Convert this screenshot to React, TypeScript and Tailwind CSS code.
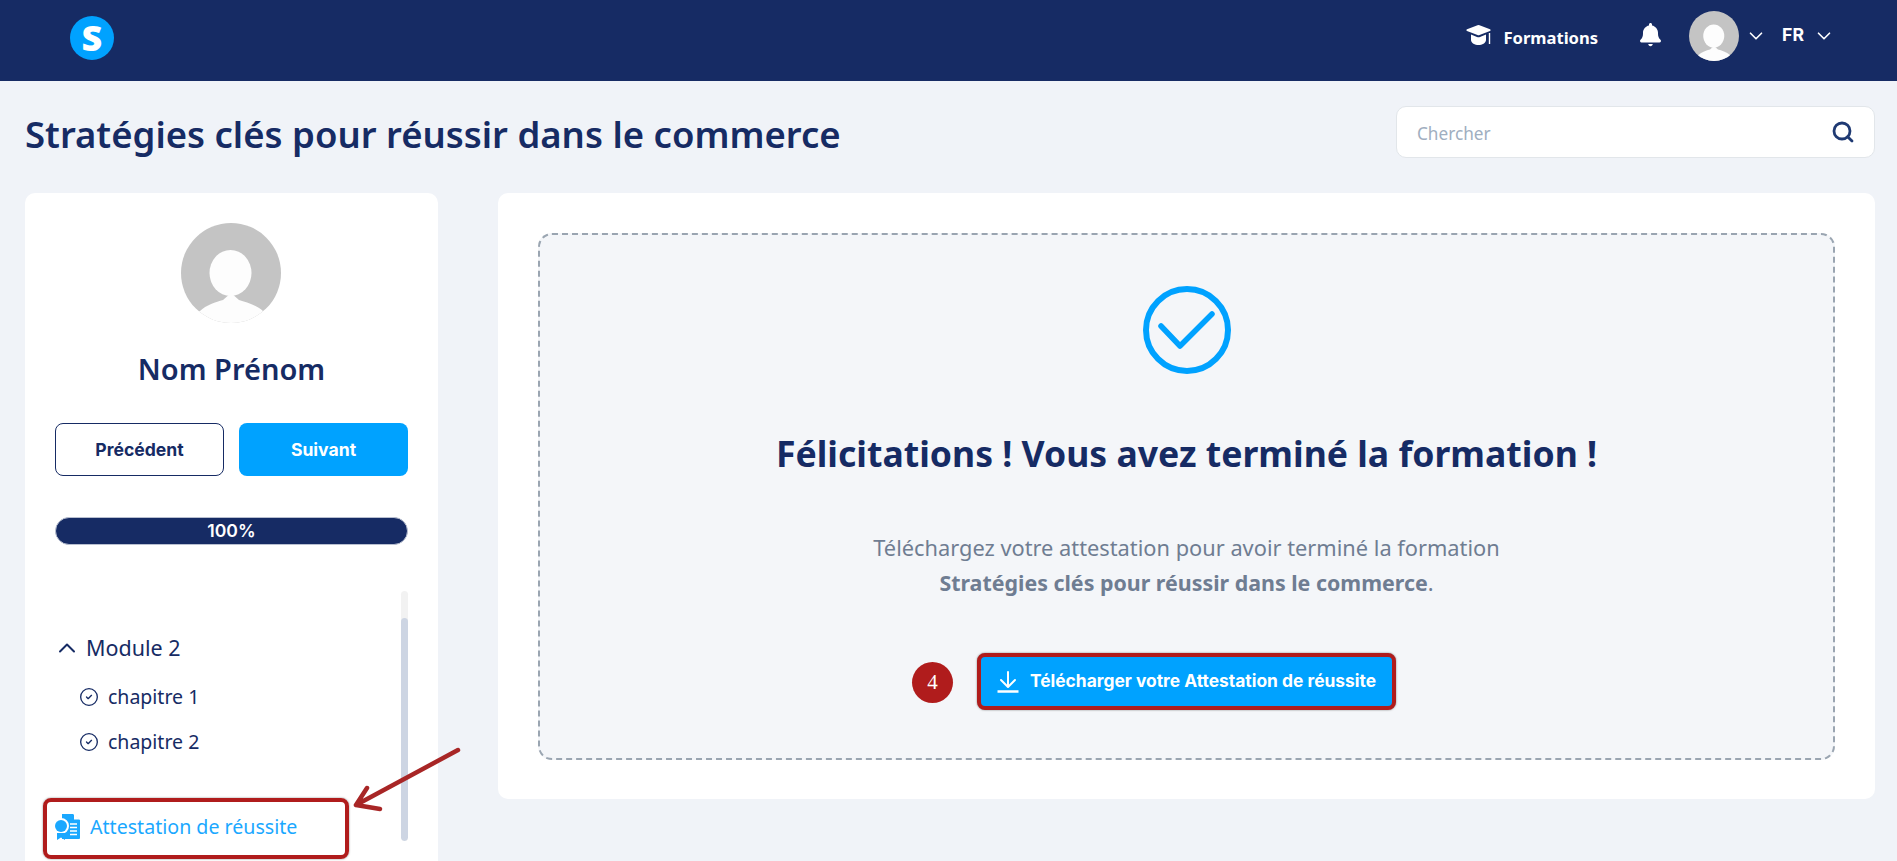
import { ChevronDown, ChevronUp, CircleCheck, Search } from "lucide-react";

const mulish = "font-['Noto_Sans','Open_Sans',sans-serif]";
const inter = "font-['Inter',sans-serif]";

function Avatar({ className }: { className: string }) {
  return (
    <svg viewBox="0 0 100 100" className={className}>
      <defs>
        <clipPath id="avatar-clip">
          <circle cx="50" cy="50" r="50" />
        </clipPath>
      </defs>
      <g clipPath="url(#avatar-clip)">
        <rect width="100" height="100" fill="#c4c4c4" />
        <ellipse cx="49.5" cy="50" rx="21" ry="23" fill="#fdfdfd" />
        <path d="M0 100V88H19C25 82 35 79 42 77L50 70L58 77C65 79 75 82 82 88H100V100Z" fill="#fdfdfd" />
      </g>
    </svg>
  );
}

function Header() {
  return (
    <header className="flex h-[81px] items-center justify-between bg-[#162b64] pl-[70px] pr-[62px]">
      <div className="-mt-[5px] flex h-11 w-11 items-center justify-center rounded-full bg-[#00a2ff]">
        <span className={`${mulish} text-[36px] font-black leading-none text-white`}>S</span>
      </div>
      <div className="-mt-[9px] flex items-center text-white">
        <svg viewBox="0 0 25 20" className="-mt-[3px] h-5 w-[25px]" fill="currentColor">
          <path d="M11.5.3a3 3 0 0 1 2 0L24 4.2c.9.4.9 1.3 0 1.7L13.5 10a3 3 0 0 1-2 0L1 5.9c-.9-.4-.9-1.3 0-1.7z" />
          <path d="M5 9.6l6 2.4a4 4 0 0 0 3 0l6-2.4V15c0 3-4 5-7.500 5S5 18 5 15z" />
          <rect x="22.800" y="8" width="1.400" height="11" />
        </svg>
        <span className={`${mulish} ml-[12px] mt-[5px] text-[16.6px] font-bold`}>Formations</span>
        <svg viewBox="0 0 448 512" className="-mt-[3px] ml-[42px] h-[24px] w-[21px]" fill="currentColor">
          <path d="M224 0c-18 0-32 14-32 32v19C119 66 64 131 64 208v19c0 47-17 92-48 127l-8 8c-8 10-10 23-5 35s17 19 29 19h384c12 0 24-7 29-19s3-25-5-35l-8-8c-31-35-48-80-48-127v-19c0-77-55-142-128-157V32c0-18-14-32-32-32zM176 448c0 26 22 48 48 48s48-22 48-48z" />
        </svg>
        <Avatar className="ml-[28px] h-[50px] w-[50px]" />
        <ChevronDown className="ml-[6px] h-[22px] w-[22px]" strokeWidth={1.8} />
        <span className={`${inter} -mt-[2px] ml-[15px] text-[17.600px] font-bold`}>FR</span>
        <ChevronDown className="ml-[9px] h-[22px] w-[22px]" strokeWidth={1.8} />
      </div>
    </header>
  );
}

function Sidebar() {
  return (
    <aside className="relative h-[700px] w-[413px] shrink-0 rounded-[10px] bg-white pl-[30px] pr-[30px] pt-[30px]">
      <Avatar className="ml-[126px] h-[100px] w-[100px]" />
      <h2 className={`${mulish} mt-[27px] text-center text-[29px] font-semibold leading-[38px] text-[#162b64]`}>
        Nom Prénom
      </h2>
      <div className={`${inter} mt-[35px] flex gap-[15px] text-[17.600px] font-bold`}>
        <button className="h-[53px] w-[169px] rounded-[8px] border border-[#162b64] bg-white pt-px text-[#162b64]">
          Précédent
        </button>
        <button className="h-[53px] w-[169px] rounded-[8px] bg-[#00a2ff] pt-[2px] text-white">Suivant</button>
      </div>
      <div className={`${inter} mt-[41px] flex h-[28px] w-[353px] items-center justify-center rounded-full border border-[#b8bfd0] bg-[#162b64] pt-px text-[17.600px] font-semibold text-white`}>
        100%
      </div>
      <div className="mt-[46px] flex">
        <div className={`${mulish} w-[346px] pt-[39px] text-[#162b64]`}>
          <div className="-ml-[2px] flex h-[36px] items-center">
            <ChevronUp className="h-[28px] w-[28px]" strokeWidth={1.7} />
            <span className="ml-[5px] text-[21.500px]">Module 2</span>
          </div>
          <div className="mt-[13px] flex h-[36px] items-center pl-[24px]">
            <CircleCheck className="h-[20px] w-[20px]" strokeWidth={1.6} />
            <span className="ml-[9px] text-[19.500px]">chapitre 1</span>
          </div>
          <div className="mt-[9px] flex h-[36px] items-center pl-[24px]">
            <CircleCheck className="h-[20px] w-[20px]" strokeWidth={1.6} />
            <span className="ml-[9px] text-[19.500px]">chapitre 2</span>
          </div>
          <div className="mt-[49px] flex h-[36px] items-center text-[#1aa8ff]">
            <svg viewBox="0 0 26 26" className="h-[26px] w-[26px]" fill="currentColor">
              <path d="M7 0H18L25 6V24a1 1 0 0 1-1 1H7z" />
              <path d="M19 0L25 5.500H19z" fill="#fff" />
              <circle cx="6" cy="12" r="8" fill="#fff" />
              <circle cx="6" cy="12" r="6" />
              <path d="M2 19H10V26L6 23.500L2 26z" />
              <path d="M15 10h7M15 13.500h7M15 17h7M15 20.500h7" stroke="#fff" strokeWidth="1.500" />
            </svg>
            <span className="ml-[9px] text-[19.600px]">Attestation de réussite</span>
          </div>
        </div>
        <div className="h-[250px] w-[7px] overflow-hidden rounded bg-[#f2f2f2] pt-[27px]">
          <div className="h-full rounded bg-[#cdd5e3]" />
        </div>
      </div>
      {/* annotation over the last link */}
      <div className="absolute left-[18px] top-[605px] h-[61px] w-[306px] rounded-[8px] border-4 border-[#b01c1c] shadow-[0_0_2px_rgba(0,0,0,0.5)]" />
    </aside>
  );
}

function Completed() {
  return (
    <section className="ml-[60px] h-[606px] flex-1 rounded-[10px] bg-white p-[40px]">
      <div className="flex h-[527px] flex-col items-center rounded-[14px] border-2 border-dashed border-[#9aa5b1] bg-[#f4f6f9] pt-[51px]">
        <svg viewBox="0 0 88 88" className="h-[88px] w-[88px]" fill="none" stroke="#00a2ff">
          <circle cx="44" cy="44" r="41" strokeWidth="6" />
          <path d="M18 40L37 60L69 28" strokeWidth="5.500" strokeLinecap="round" strokeLinejoin="round" />
        </svg>
        <h2 className={`${mulish} mt-[54px] text-[35.600px] font-bold leading-[50px] text-[#162b64]`}>
          Félicitations ! Vous avez terminé la formation !
        </h2>
        <p className={`${mulish} mt-[52px] text-center text-[21.800px] leading-[35px] text-[#6f7d92]`}>
          Téléchargez votre attestation pour avoir terminé la formation
          <br />
          <span className="text-[21.400px] font-bold">Stratégies clés pour réussir dans le commerce</span>.
        </p>
        <div className="relative mt-[53px]">
          <button className={`${inter} flex h-[57px] w-[419px] items-center justify-center gap-[11px] rounded-[8px] border-4 border-[#b01c1c] bg-[#00a2ff] text-[17.400px] font-bold text-white shadow-[0_0_2px_rgba(0,0,0,0.5)]`}>
            <svg viewBox="0 0 22 22" className="h-[22px] w-[22px]" fill="none" stroke="currentColor" strokeWidth="2">
              <path d="M11 1V15M4 9L11 16L18 9" strokeLinecap="round" strokeLinejoin="round" />
              <path d="M0.500 20.500H21.500" strokeWidth="2.500" />
            </svg>
            Télécharger votre Attestation de réussite
          </button>
          <div className="absolute -left-[65px] top-[9px] flex h-[41px] w-[41px] items-center justify-center rounded-full bg-[#b01c1c] font-['Liberation_Serif',serif] text-[21px] text-white">
            4
          </div>
        </div>
      </div>
    </section>
  );
}

export default function App() {
  return (
    <div className="relative h-[861px] w-full overflow-hidden bg-[#f0f3f8]">
      <Header />
      <main className="pl-[25px] pr-[22px]">
        <div className="flex h-[112px] items-start justify-between pt-[25px]">
          <h1 className={`${mulish} text-[36.500px] font-semibold leading-[56px] text-[#162b64]`}>
            Stratégies clés pour réussir dans le commerce
          </h1>
          <div className={`${mulish} flex h-[52px] w-[479px] items-center justify-between rounded-[10px] border border-[#e2e6ea] bg-white pl-[20px] pr-[19px] text-[17.200px] text-[#a0aec0]`}>
            <span className="mt-[3px]">Chercher</span>
            <Search className="h-[24px] w-[24px] text-[#1f3a73]" strokeWidth={2.8} />
          </div>
        </div>
        <div className="flex">
          <Sidebar />
          <Completed />
        </div>
      </main>
      {/* annotation arrow */}
      <svg className="absolute left-[350px] top-[740px] h-[80px] w-[120px]" viewBox="0 0 120 80" fill="none">
        <path d="M108 10L6 65M17 48L6 65L30 69" stroke="#a82626" strokeWidth="4.500" strokeLinecap="round" strokeLinejoin="round" />
      </svg>
    </div>
  );
}
